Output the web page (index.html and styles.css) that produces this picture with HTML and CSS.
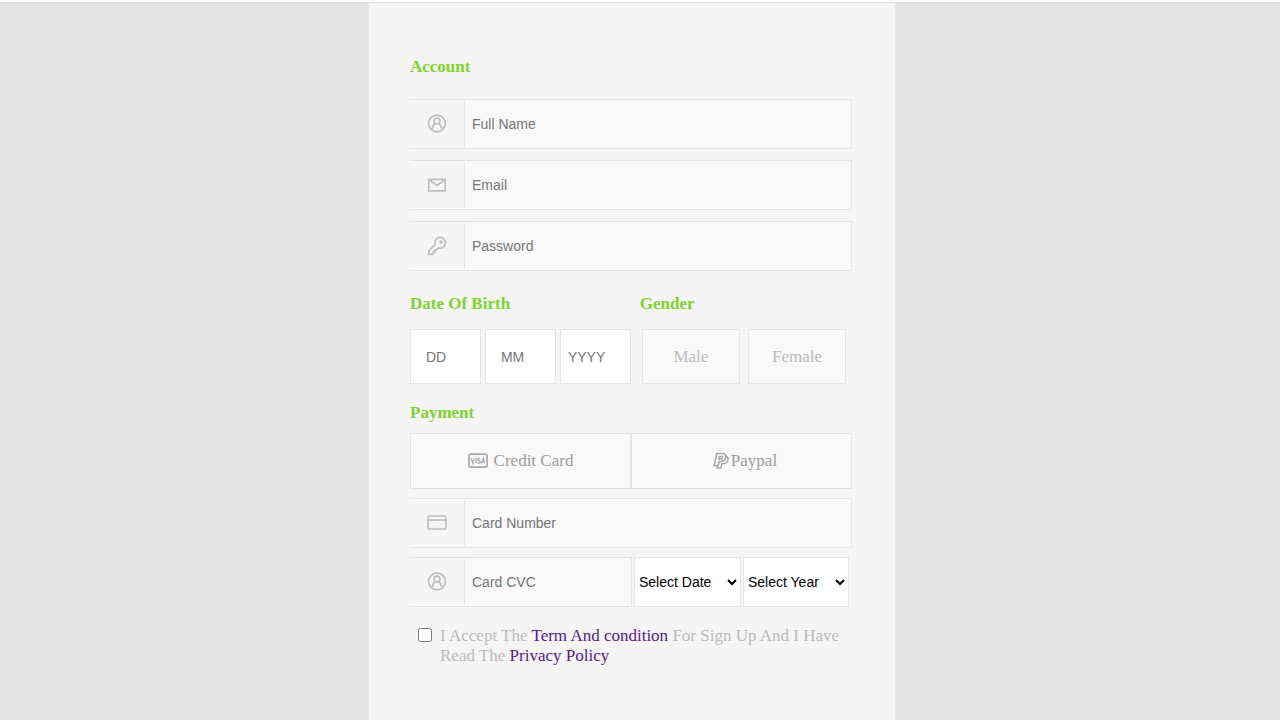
FILE: index.html
```html
<!DOCTYPE html>
<html lang="en">
	<head>
		<meta charset="utf-8">
		<meta name="viewport" content="width=device-width, initial-scale=1">
		<title>Sign Up</title>
		<link rel="stylesheet" href="styles.css">
	</head>
	<body>
		<!-- shared icon -->
		<svg class="sprite" width="0" height="0" aria-hidden="true">
			<symbol id="user" viewBox="0 0 20 20">
				<circle cx="10" cy="9.5" r="8.4"/>
				<circle cx="10" cy="7.1" r="2.9"/>
				<path d="M5.4 14.9c.3-3 1.4-4.5 2.8-5.2M14.6 14.9c-.3-3-1.4-4.5-2.8-5.2"/>
			</symbol>
		</svg>
		<main class="container">
			<form action="" method="post">
				<h4 class="account">Account</h4>
				<div class="field">
					<label class="icon" for="name" aria-label="Full Name"><svg><use href="#user"/></svg></label>
					<input type="text" id="name" placeholder="Full Name">
				</div>
				<div class="field">
					<label class="icon" for="email" aria-label="Email"><svg viewBox="0 0 20 20"><path d="M1.8 4.4h16.4v11.4H1.8zM2.2 4.8l7.8 5.6 7.8-5.6"/></svg></label>
					<input type="email" id="email" placeholder="Email">
				</div>
				<div class="field">
					<label class="icon" for="pwd" aria-label="Password"><svg viewBox="0 0 20 20"><path d="M8 8.6a5.4 5.4 0 1 1 3.6 3.4l-1.6 1.6H8.3v1.8H6.5v1.7l-1.4 1.3H1.8v-3.6z"/><circle cx="14" cy="6" r=".8"/></svg></label>
					<input type="password" id="pwd" placeholder="Password">
				</div>
				<div class="row">
					<div class="birth">
						<h4>Date Of Birth</h4>
						<div class="dates">
							<input type="text" placeholder="DD" aria-label="Day">
							<input type="text" placeholder="MM" aria-label="Month">
							<input type="text" class="year" placeholder="YYYY" aria-label="Year">
						</div>
					</div>
					<div class="gender">
						<h4>Gender</h4>
						<div class="choice">
							<button type="button">Male</button>
							<button type="button">Female</button>
						</div>
					</div>
				</div>
				<h4 class="payment">Payment</h4>
				<div class="pay">
					<button type="button" class="credit">
						<svg viewBox="0 0 20 20"><rect x="1" y="3.2" width="18" height="13" rx="1.4"/><path class="thin" d="M3.2 7.4l1.5 4.8 1.7-4.8M8.3 7.4l-.6 4.8M12.3 7.8c-1-.6-2.6-.4-2.6.7 0 1.4 2.5.8 2.5 2.3s-1.9 1.6-2.9.9M13 12.2l2.4-4.8 1 4.8M14 10.8h2.2"/></svg>
						Credit Card
					</button>
					<button type="button" class="paypal">
						<svg viewBox="0 0 20 20"><path d="M5.2 1.7h6.2c3 0 4.4 1.7 3.8 4.4-.6 3-2.7 4.5-5.7 4.5H7.8l-.9 4.7H2.4zM8.2 4.9h2.3c1 0 1.4.6 1.2 1.4-.2 1-.8 1.4-1.8 1.4H7.7zM15.6 4.7c2 .8 2.6 2.3 2.2 4.1-.6 2.9-2.7 4.2-5.4 4.2h-1.6l-.9 4.8H5.8l.5-2.4"/></svg>
						Paypal
					</button>
				</div>
				<div class="field">
					<label class="icon" for="card" aria-label="Card Number"><svg viewBox="0 0 20 20"><rect x="1" y="3" width="18" height="13" rx="1.4"/><path d="M1 7h18"/></svg></label>
					<input type="text" id="card" placeholder="Card Number">
				</div>
				<div class="cvc">
					<div class="field">
						<label class="icon" for="cvc" aria-label="Card CVC"><svg><use href="#user"/></svg></label>
						<input type="text" id="cvc" placeholder="Card CVC">
					</div>
					<select aria-label="Expiry date">
						<option>Select Date</option>
					</select>
					<select aria-label="Expiry year">
						<option>Select Year</option>
					</select>
				</div>
				<div class="terms">
					<input type="checkbox" id="accept">
					<label for="accept">I Accept The <a href="#">Term And condition</a> For Sign Up And I Have Read The <a href="#">Privacy Policy</a></label>
				</div>
			</form>
		</main>
	</body>
</html>
```

FILE: styles.css
```css
*{
	box-sizing: border-box;
}
html{
	border-top: 2px solid #fcfcfc;
	background: #e4e4e4;
}
body,h4{
	margin: 0;
}
body{
	padding-right: 16px;
	border-top: 1px solid #dcdcde;
	font-family: "Liberation Serif", "Times New Roman", serif;
	font-size: 17px;
	line-height: 20px;
	color: #bbb;
}
.sprite{
	position: absolute;
}
.container{
	max-width: 526px;
	min-height: calc(100vh - 3px);
	margin: 0 auto;
	padding: 54px 43px 40px 41px;
	background: #f5f5f5;
}
h4{
	font-size: 17px;
	color: #7ed32f;
}
input,select{
	font-family: "Liberation Sans", Arial, sans-serif;
	font-size: 14px;
}
input::placeholder{
	color: #757575;
}
svg{
	width: 20px;
	height: 20px;
	fill: none;
	stroke: #bfbfbf;
	stroke-width: 1.7;
}
.account{
	margin-bottom: 22px;
}
.field{
	display: flex;
	min-width: 0;
	height: 50px;
	margin-bottom: 11px;
	padding: 1px 0;
	border: 1px solid #e4e4e4;
	border-left: none;
	background: #f9f9f9;
}
.icon{
	display: flex;
	flex: none;
	align-items: center;
	justify-content: center;
	width: 55px;
	border-right: 1px solid #e4e4e4;
	background: #f5f5f5;
}
.field input{
	flex: 1;
	min-width: 0;
	padding: 0 7px;
	border: none;
	background: none;
}
.row{
	display: flex;
	margin-top: 23px;
}
.birth{
	width: 52%;
}
.gender{
	flex: 1;
}
.dates,.choice{
	display: grid;
	height: 55px;
	margin-top: 15px;
}
.dates{
	grid-template-columns: repeat(3, 1fr);
	gap: 4px;
	margin-right: 9px;
}
.choice{
	grid-template-columns: repeat(2, 1fr);
	gap: 8px;
	margin-right: 6px;
	margin-left: 2px;
}
.dates input{
	width: 100%;
	padding: 0 15px;
	border: 1px solid #e4e4e4;
	background: #fff;
}
.dates .year{
	padding: 0 7px;
}
button{
	border: 1px solid #e4e4e4;
	background: #f9f9f9;
	font-family: inherit;
	font-size: 17px;
	color: #bbb;
}
.payment{
	margin-top: 19px;
}
.pay{
	display: grid;
	grid-template-columns: repeat(2, 1fr);
	height: 56px;
	margin: 10px 0 9px;
}
.pay button{
	display: flex;
	align-items: center;
	justify-content: center;
	color: #9c9c9c;
}
.pay svg{
	stroke: #a8a8a8;
}
.pay .thin{
	stroke-width: 1.3;
}
.pay .credit{
	gap: 6px;
}
.pay .paypal{
	gap: 1px;
	padding-left: 12px;
}
.paypal svg{
	width: 18px;
	height: 18px;
}
.cvc{
	display: grid;
	grid-template-columns: 222fr 107fr 106fr;
	gap: 2px;
	margin-top: -2px;
	margin-right: 3px;
}
.cvc .field{
	margin: 0;
}
select{
	width: 100%;
	min-width: 0;
	border: 1px solid #e4e4e4;
	border-radius: 0;
	background: #fff;
	color: #000;
}
.terms{
	display: flex;
	align-items: flex-start;
	gap: 8px;
	margin-top: 19px;
}
.terms input{
	flex: none;
	width: 14px;
	height: 14px;
	margin: 2px 0 0 8px;
}
.terms a{
	color: #551a8b;
	text-decoration: none;
}
```
